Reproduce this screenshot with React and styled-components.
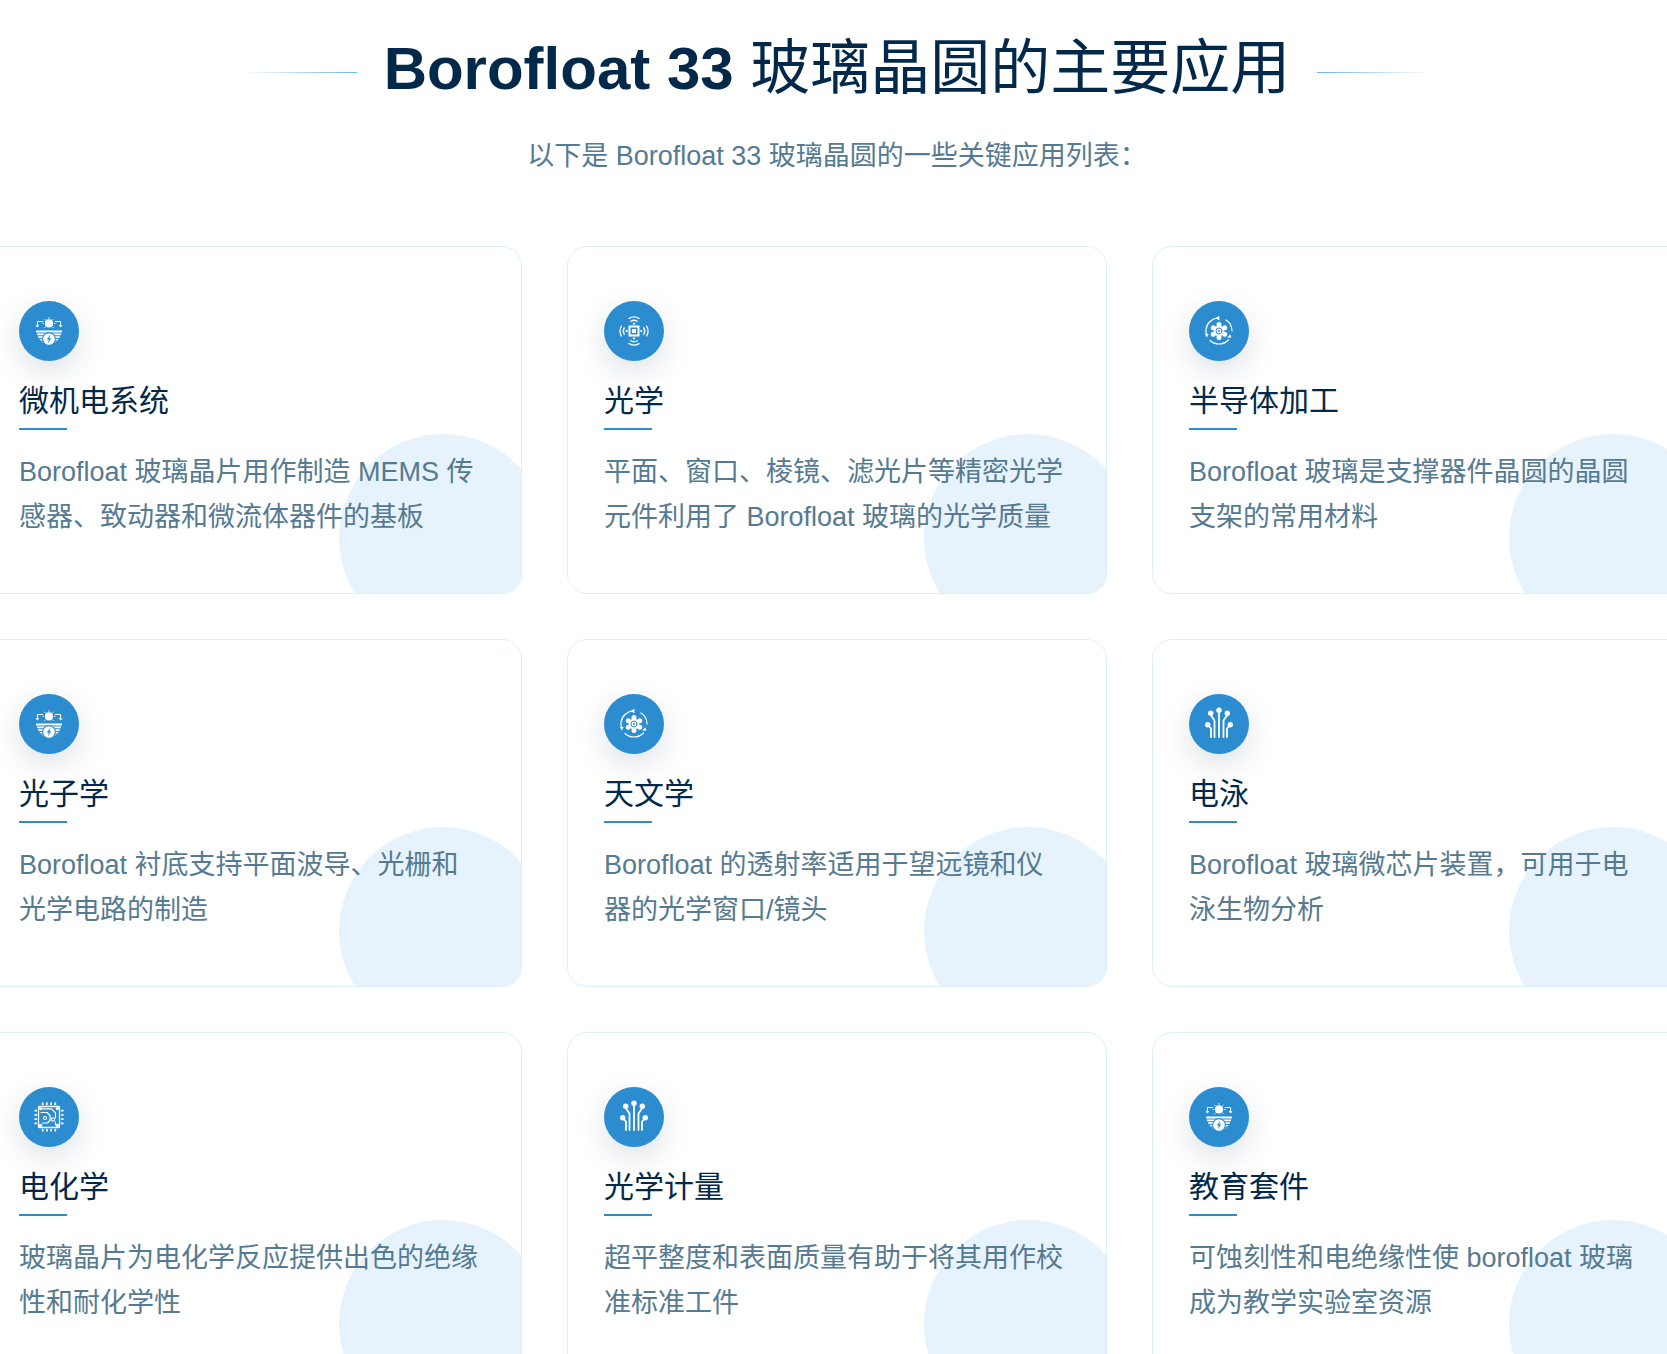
import React from 'react'
import styled, { createGlobalStyle } from 'styled-components'

const GlobalStyle = createGlobalStyle`
html, body { margin: 0; padding: 0; background: #fff; overflow: hidden; }
body { font-family: "Liberation Sans", "Noto Sans CJK SC", sans-serif; }
`

const Page = styled.div`
  width: 1667px;
  height: 1354px;
  overflow: hidden;
  position: relative;
`
const Section = styled.div`
  width: 1710px;
  margin-left: -18px;
`
const Heading = styled.div`
  display: flex;
  justify-content: center;
  align-items: center;
  gap: 27px;
  height: 134px;
`
const Rule = styled.span`
  width: 115px;
  height: 1px;
  margin-top: 10px;
  background: linear-gradient(${p => (p.$flip ? '270deg' : '90deg')}, rgba(43, 140, 207, 0), #6cb4e4);
`
const Title = styled.h1`
  margin: 0;
  padding-top: 4px;
  font-size: 60px;
  line-height: 72px;
  font-weight: 700;
  color: #02294a;
  white-space: nowrap;
`
const TitleCjk = styled.span`
  font-weight: 400;
`
const Subtitle = styled.p`
  margin: 0;
  height: 111px;
  padding-top: 1px;
  font-size: 27px;
  line-height: 42px;
  text-align: center;
  color: #557a92;
`
const Grid = styled.div`
  display: grid;
  grid-template-columns: repeat(3, 540px);
  grid-auto-rows: 348px;
  column-gap: 45px;
  row-gap: 45px;
`
const Card = styled.div`
  position: relative;
  overflow: hidden;
  box-sizing: border-box;
  padding: 54px 36px 0;
  background: #fff;
  border: 1px solid #dcf0fc;
  border-radius: 20px;
`
const Blob = styled.span`
  position: absolute;
  right: -26px;
  bottom: -49px;
  width: 208px;
  height: 208px;
  border-radius: 50%;
  background: #e6f3fd;
`
const IconBadge = styled.div`
  position: relative;
  width: 60px;
  height: 60px;
  border-radius: 50%;
  display: flex;
  align-items: center;
  justify-content: center;
  background: #2b8ccf;
  box-shadow: 0 10px 30px rgba(2, 41, 74, 0.14);
`
const CardTitle = styled.h3`
  position: relative;
  margin: 18px 0 0;
  padding-bottom: 7px;
  font-size: 30px;
  line-height: 44px;
  font-weight: 400;
  color: #02294a;
  &::after {
    content: "";
    position: absolute;
    left: 0;
    bottom: 0;
    width: 48px;
    height: 2px;
    background: #2b8ccf;
  }
`
const CardText = styled.p`
  position: relative;
  margin: 20px 0 0;
  font-size: 27px;
  line-height: 44.6px;
  color: #557a92;
`
const IconSvg = styled.svg`
  overflow: visible;
`

const Svg = ({ children }) => (
  <IconSvg width="32" height="32" viewBox="0 0 32 32" fill="none" stroke="#fff" strokeLinecap="round" strokeLinejoin="round">
    {children}
  </IconSvg>
)

const SolarIcon = () => (
  <Svg>
    <circle cx="16" cy="8.400" r="4.100" fill="#fff" stroke="none" />
    <path strokeWidth="0.800" d="M16 2.400v1M9.800 8.400h.9M21.300 8.400h.9M11.600 4l.7.7M20.400 4l-.7.7M11.600 12.800l.7-.7M20.400 12.800l-.7-.7" />
    <path strokeWidth="1" d="M9.800 6.500H4.400v5M3.200 10.400l1.200 1.700 1.200-1.700M22.200 6.500h5.400v5M26.400 10.400l1.200 1.700 1.200-1.700" />
    <path fill="#fff" stroke="none" d="M3 15.400h26l-.2 2H3.200zM3.700 18.400h24.600l-.6 1.800H4.300zM4.800 21.200h22.400l-.9 1.700H5.700zM6.300 23.900h19.400l-1.300 1.600H7.600zM8.500 26.400h15l-1.800 1.500H10.300z" />
    <circle cx="16" cy="24" r="6.400" fill="#fff" stroke="#2b8ccf" strokeWidth="1.100" />
    <path fill="#2b8ccf" stroke="none" d="M17.300 19.600l-3.500 5h2l-1 3.800 3.500-5.200h-2z" />
  </Svg>
)

const WaveIcon = () => (
  <Svg>
    <rect x="10.500" y="10.500" width="11" height="11" fill="#fff" stroke="none" />
    <rect x="13.200" y="13.200" width="5.600" height="5.600" stroke="#2b8ccf" strokeWidth="1.500" />
    <path fill="#fff" stroke="none" d="M14.900 7.800h2.200v1.800h-2.200zM14.900 22.400h2.200v1.800h-2.200zM7.800 14.900h1.800v2.200H7.800zM22.400 14.900h1.800v2.200h-1.800z" />
    <path strokeWidth="1.300" d="M12.800 6.200c2-1.200 4.400-1.200 6.400 0M11 3.400c3.100-1.800 6.900-1.800 10 0M12.800 25.800c2 1.200 4.400 1.200 6.400 0M11 28.600c3.100 1.800 6.900 1.800 10 0M6.200 12.800c-1.200 2-1.200 4.400 0 6.400M3.400 11c-1.800 3.100-1.800 6.900 0 10M25.800 12.800c1.200 2 1.200 4.400 0 6.400M28.600 11c1.800 3.100 1.800 6.900 0 10" />
  </Svg>
)

const AtomIcon = () => (
  <Svg>
    <path strokeWidth="1.200" d="M15 3C9 3.300 3.700 8.200 3 14.500c-.1 1.600.1 3.200.5 4.700M7 25.500C9.400 27.800 12.600 29 16 29c3.700 0 7-1.500 9.500-4M29 16c0-4.600-2.400-8.700-6.100-11" />
    <path fill="#fff" stroke="none" d="M16.400 .8v4.600L12.800 3.100zM1.600 18.800l4 .1-1.700 3.700zM28.600 22.400l-4.300.4 2.800-3.600z" />
    <g fill="#fff" stroke="none">
      <circle cx="16" cy="9.400" r="2.500" />
      <circle cx="16" cy="22.600" r="2.500" />
      <circle cx="10.300" cy="12.700" r="2.500" />
      <circle cx="21.700" cy="12.700" r="2.500" />
      <circle cx="10.300" cy="19.300" r="2.500" />
      <circle cx="21.700" cy="19.300" r="2.500" />
      <circle cx="16" cy="16" r="5.400" />
    </g>
    <circle cx="16" cy="16" r="3" stroke="#2b8ccf" strokeWidth="1" />
    <circle cx="16" cy="16" r="1" fill="#2b8ccf" stroke="none" />
  </Svg>
)

const CircuitIcon = () => (
  <Svg>
    <g fill="#fff" stroke="none">
      <circle cx="16" cy="2.300" r="2.700" />
      <circle cx="7.700" cy="5.300" r="2.700" />
      <circle cx="24.300" cy="5.300" r="2.700" />
      <circle cx="4.700" cy="16.700" r="2.700" />
      <circle cx="27.300" cy="16.700" r="2.700" />
    </g>
    <path strokeWidth="1.800" d="M16 4v25M11.500 29V12.500L7.700 7M20.500 29V12.500L24.300 7M8 29V20.500L5.200 17.500M24 29V20.500L26.800 17.500" />
  </Svg>
)

const ChipIcon = () => (
  <Svg>
    <rect x="5.500" y="5.500" width="21" height="21" rx="1" strokeWidth="1.300" />
    <path strokeWidth="1.700" strokeLinecap="butt" d="M9.700 1.500v2.400M13.900 1.500v2.400M18.100 1.500v2.400M22.300 1.500v2.400M9.700 28.100v2.400M13.900 28.100v2.400M18.100 28.100v2.400M22.300 28.100v2.400M1.500 9.700h2.400M1.500 13.900h2.400M1.500 18.100h2.400M1.500 22.300h2.400M28.100 9.700h2.400M28.100 13.900h2.400M28.100 18.100h2.400M28.100 22.300h2.400" />
    <g fill="#fff" stroke="none">
      <circle cx="7.600" cy="7.600" r="1.700" />
      <circle cx="24.400" cy="7.600" r="1.700" />
      <circle cx="7.600" cy="24.400" r="1.700" />
      <circle cx="24.400" cy="24.400" r="1.700" />
    </g>
    <path strokeWidth="1.200" d="M9.500 7.800h9l4 4v5M8 11.500h6l3 3v5l-2.500 2.500H9.500M22.500 24v-3" />
    <circle cx="20" cy="18.500" r="1.600" strokeWidth="1.100" />
    <circle cx="12" cy="17" r="1.500" strokeWidth="1.100" />
  </Svg>
)

const applications = [
  { icon: SolarIcon, title: '微机电系统', text: 'Borofloat 玻璃晶片用作制造 MEMS 传感器、致动器和微流体器件的基板' },
  { icon: WaveIcon, title: '光学', text: '平面、窗口、棱镜、滤光片等精密光学元件利用了 Borofloat 玻璃的光学质量' },
  { icon: AtomIcon, title: '半导体加工', text: 'Borofloat 玻璃是支撑器件晶圆的晶圆支架的常用材料' },
  { icon: SolarIcon, title: '光子学', text: 'Borofloat 衬底支持平面波导、光栅和光学电路的制造' },
  { icon: AtomIcon, title: '天文学', text: 'Borofloat 的透射率适用于望远镜和仪器的光学窗口/镜头' },
  { icon: CircuitIcon, title: '电泳', text: 'Borofloat 玻璃微芯片装置，可用于电泳生物分析' },
  { icon: ChipIcon, title: '电化学', text: '玻璃晶片为电化学反应提供出色的绝缘性和耐化学性' },
  { icon: CircuitIcon, title: '光学计量', text: '超平整度和表面质量有助于将其用作校准标准工件' },
  { icon: SolarIcon, title: '教育套件', text: '可蚀刻性和电绝缘性使 borofloat 玻璃成为教学实验室资源' },
]

const App = () => {
  return (
    <Page>
      <GlobalStyle />
      <Section>
        <Heading>
          <Rule />
          <Title>Borofloat 33 <TitleCjk>玻璃晶圆的主要应用</TitleCjk></Title>
          <Rule $flip />
        </Heading>
        <Subtitle>以下是 Borofloat 33 玻璃晶圆的一些关键应用列表：</Subtitle>
        <Grid>
          {applications.map(item => (
            <Card key={item.title}>
              <Blob />
              <IconBadge><item.icon /></IconBadge>
              <CardTitle>{item.title}</CardTitle>
              <CardText>{item.text}</CardText>
            </Card>
          ))}
        </Grid>
      </Section>
    </Page>
  )
}

export default App
